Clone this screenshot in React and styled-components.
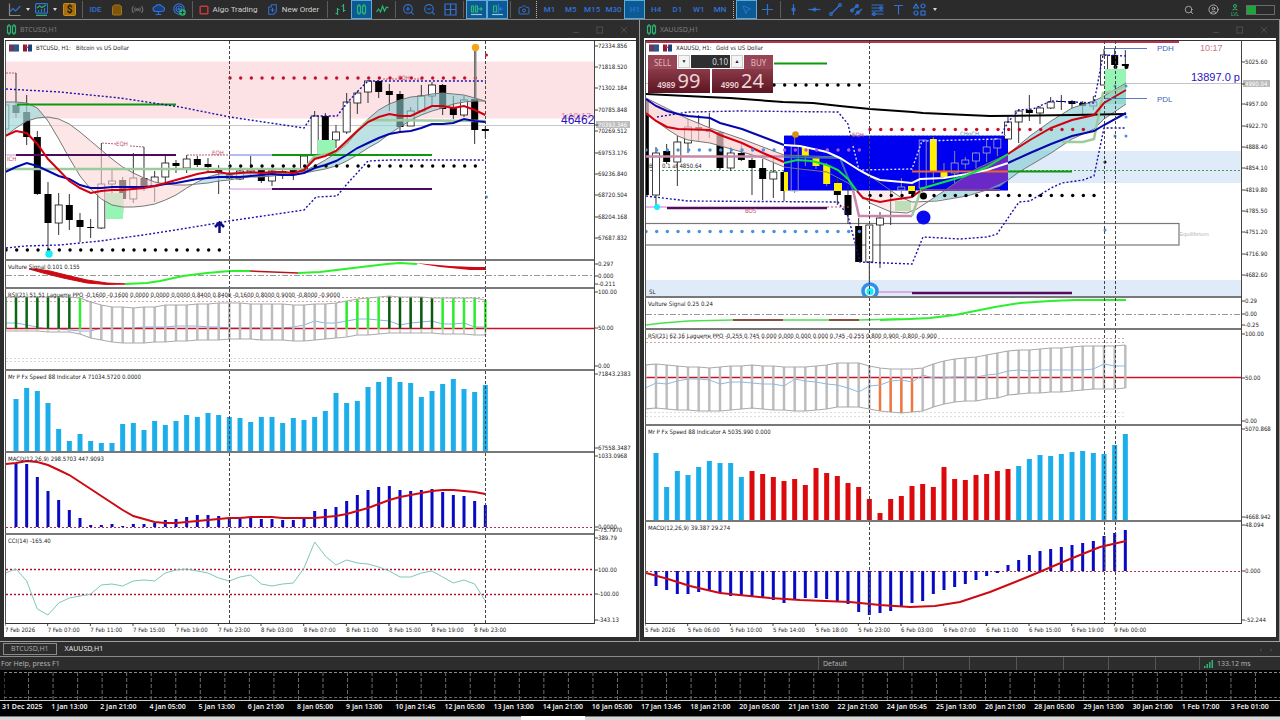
import React, { useState } from 'react';
import styled, { createGlobalStyle } from 'styled-components';
import { ZoomIn, ZoomOut, ShoppingBag, Search, CircleUser, MousePointer2, Camera, Cloud } from 'lucide-react';

const GlobalStyle = createGlobalStyle`
  * {
    box-sizing: border-box;
  }

  body {
    margin: 0;
    background-color: #2d2d2d;
    font-family: 'Noto Sans', 'Open Sans', sans-serif;
    font-size: 7px;
    overflow-x: hidden;
  }

  button,
  input {
    font-family: inherit;
    padding: 0;
    border: none;
    background: none;
  }
`;

/* ---------- toolbar ---------- */

const Toolbar = styled.header`
  display: flex;
  align-items: center;
  height: 20px;
  padding: 0 5px;
  border-bottom: 1px solid #858585;
  background-color: #2b2b2b;
  font-family: Roboto, 'Noto Sans', sans-serif;
`;

const Tool = styled.button`
  display: flex;
  align-items: center;
  justify-content: center;
  gap: 4px;
  flex: none;
  width: ${(props) => props.$w || '21px'};
  height: 19px;
  color: ${(props) => props.$color || '#2f72d8'};
  background-color: ${(props) => (props.$on ? '#0b5a94' : 'transparent')};
  border: 1px solid ${(props) => (props.$on ? '#5fa8d8' : 'transparent')};
  font-size: 8px;
  font-weight: ${(props) => (props.$bold ? 500 : 400)};
  white-space: nowrap;
`;

const Caret = styled.button`
  display: flex;
  align-items: center;
  justify-content: center;
  flex: none;
  width: 9px;
  height: 19px;

  &::after {
    content: '';
    border: 2px solid transparent;
    border-top: 3px solid #d8d8d8;
    border-bottom: none;
  }
`;

const Sep = styled.span`
  flex: none;
  width: 1px;
  height: 17px;
  margin: 0 2px;
  border-left: 1px ${(props) => (props.$dotted ? 'dotted #bdbdbd' : 'solid #5c5c5c')};
`;

const Frames = styled.div`
  display: grid;
  grid-template-columns: repeat(9, 1fr);
  flex: none;
  width: 192px;
`;

const Spacer = styled.span`
  flex: 1;
`;

const Battery = styled.span`
  width: 29px;
  height: 10px;
  border: 1px solid #6a6a6a;
  background: linear-gradient(90deg, #1fa33c 9px, #2b2b2b 9px);
`;

const Glyph = ({ size = 13, children, color = 'currentColor' }) => (
  <svg width={size} height={size} viewBox="0 0 13 13" fill="none" stroke={color} strokeWidth="1.2">
    {children}
  </svg>
);

const GREEN = '#2bb673';

const CandlesGlyph = () => (
  <Glyph color={GREEN}>
    <rect x="2.5" y="3" width="3" height="7" />
    <rect x="7.5" y="3" width="3" height="7" />
    <path d="M4 1v2M4 10v2M9 1v2M9 10v2" />
  </Glyph>
);

function MainToolbar() {
  const [frame, setFrame] = useState('H1');
  return (
    <Toolbar>
      <Tool $w="18px" aria-label="Chart">
        <Glyph>
          <path d="M1.5 0.5v12h11" stroke="#8a8a8a" />
          <path d="M2 8.5l3-3 2.5 2.5 5-5" />
        </Glyph>
      </Tool>
      <Caret aria-label="Chart list" />
      <Tool $w="18px" aria-label="Indicators">
        <Glyph>
          <rect x="0.6" y="0.6" width="12" height="9.5" rx="1" />
          <path d="M2 5l2.5-2 2.500 1.500 4-2.500M1 12.300h11" stroke={GREEN} />
          <path d="M3.500 7v2M6.500 6v3M9.500 5v4" />
        </Glyph>
      </Tool>
      <Caret aria-label="Indicator list" />
      <Tool aria-label="Market">
        <svg width="13" height="13">
          <rect x="0.5" y="0.5" width="12" height="12" rx="1" fill="#a86f10" stroke="#c98a18" />
          <text x="6.5" y="10" textAnchor="middle" fontSize="10" fontWeight="bold" fill="#1d1607">$</text>
        </svg>
      </Tool>
      <Sep />
      <Tool $bold>IDE</Tool>
      <Tool $color="#a87412" aria-label="Store"><ShoppingBag size={12} fill="#7d560f" /></Tool>
      <Tool $color="#6c6c6c" aria-label="Signals">
        <Glyph>
          <circle cx="6.500" cy="6.500" r="1" />
          <path d="M4.500 4.500q-1.500 2 0 4M8.500 4.500q1.500 2 0 4M2.500 3q-2.500 3.500 0 7M10.500 3q2.500 3.500 0 7" />
        </Glyph>
      </Tool>
      <Tool aria-label="Cloud">
        <Glyph>
          <path d="M3.500 8.500a2.500 2.500 0 0 1 0-5a3.500 3 0 0 1 6.500 0a2.500 2.500 0 0 1 0 5z" fill="#1c3f75" />
          <path d="M6.500 8.500v3M3.500 11.500h6" />
        </Glyph>
      </Tool>
      <Tool aria-label="Copy">
        <Glyph>
          <circle cx="6" cy="6" r="5.200" />
          <circle cx="6" cy="6" r="3" />
          <circle cx="6" cy="6" r="1" />
          <circle cx="9.500" cy="9.500" r="3.300" fill="#2bb673" stroke="none" />
          <path d="M9.500 7.500v4M7.500 9.500h4" stroke="#173a26" />
        </Glyph>
      </Tool>
      <Sep />
      <Tool $w="66px" $color="#cfcfcf">
        <Glyph size={10} color="#c43a3a"><rect x="1.500" y="1.500" width="10" height="10" rx="1" strokeWidth="2" /></Glyph>
        Algo Trading
      </Tool>
      <Tool $w="64px" $color="#cfcfcf">
        <Glyph size={11} color="#2f72d8">
          <path d="M2 3.500h3v-2.500h6v8l-3 3h-6z" />
          <path d="M6.500 4.500v5M4 7h5" />
        </Glyph>
        New Order
      </Tool>
      <Sep />
      <Tool aria-label="Bars">
        <Glyph color={GREEN}>
          <path d="M3.500 5v7M1.500 10.500h2M3.500 6.500h2M9.500 1v8M7.500 3h2M9.500 7.500h2" />
        </Glyph>
      </Tool>
      <Tool $on aria-label="Candles"><CandlesGlyph /></Tool>
      <Tool aria-label="Line">
        <Glyph color={GREEN}><path d="M0.500 9l2-3 2 3 2-6 2 5 2-4 2 1" /></Glyph>
      </Tool>
      <Sep />
      <Tool aria-label="Zoom in"><ZoomIn size={13} /></Tool>
      <Tool aria-label="Zoom out"><ZoomOut size={13} /></Tool>
      <Tool aria-label="Tile windows">
        <Glyph><path d="M1 1h11v11h-11zM6.500 1v11M1 6.500h11" /></Glyph>
      </Tool>
      <Sep />
      <Tool $on aria-label="Auto scroll">
        <Glyph color={GREEN}>
          <path d="M1.500 3h2v6h-2zM5.500 3h2v6h-2zM8 6h4M10.500 4.500l1.500 1.500-1.500 1.500" />
          <path d="M1 11.500h11" stroke="#9cc4e4" />
        </Glyph>
      </Tool>
      <Tool $on aria-label="Chart shift">
        <Glyph>
          <path d="M2.500 3h3v6h-3z" stroke={GREEN} />
          <path d="M7.500 1v9M12 6h-3M10 4.500l-1.500 1.500 1.500 1.500" />
          <path d="M1 11.500h11" stroke="#9cc4e4" />
        </Glyph>
      </Tool>
      <Sep />
      <Tool aria-label="Screenshot"><Camera size={12} /></Tool>
      <Sep $dotted />
      <Frames>
        {['M1', 'M5', 'M15', 'M30', 'H1', 'H4', 'D1', 'W1', 'MN'].map((name) => (
          <Tool key={name} $bold $on={frame === name} onClick={() => setFrame(name)}>{name}</Tool>
        ))}
      </Frames>
      <Sep $dotted />
      <Tool $on aria-label="Cursor"><MousePointer2 size={11} /></Tool>
      <Tool aria-label="Crosshair"><Glyph><path d="M6.500 1v11M1 6.500h11" /></Glyph></Tool>
      <Sep />
      <Tool aria-label="Vertical line"><Glyph><path d="M6.500 1v11" /><circle cx="6.500" cy="6.500" r="1.500" /></Glyph></Tool>
      <Tool aria-label="Horizontal line"><Glyph><path d="M0.500 6.500h12" /><circle cx="6.500" cy="6.500" r="1.500" /></Glyph></Tool>
      <Tool aria-label="Trendline">
        <Glyph><path d="M2.500 10.500l8-8" /><circle cx="2" cy="11" r="1.300" /><circle cx="11" cy="2" r="1.300" /></Glyph>
      </Tool>
      <Tool aria-label="Channel">
        <Glyph><path d="M1 8l7-6M5 12l7-6" /><circle cx="2" cy="7.500" r="1.300" /><circle cx="7" cy="3" r="1.300" /><circle cx="8" cy="9.500" r="1.300" /></Glyph>
      </Tool>
      <Tool aria-label="Fibonacci">
        <Glyph><path d="M0.500 2h12M0.500 5h12M0.500 8h12M0.500 11h12" /><circle cx="10" cy="5" r="1.300" /><circle cx="3" cy="11" r="1.300" /></Glyph>
      </Tool>
      <Tool aria-label="Text"><Glyph><path d="M2 2.500h9M6.500 2.500v9" /></Glyph></Tool>
      <Tool aria-label="Shapes">
        <Glyph><path d="M3 1l2.500 4h-5z" /><circle cx="10" cy="3" r="2" /><circle cx="3" cy="10" r="2" /><rect x="8" y="8" width="4" height="4" /></Glyph>
      </Tool>
      <Caret aria-label="Shape list" />
      <Spacer />
      <Tool $w="24px" $color="#b5b5b5" aria-label="Search"><Search size={10} /></Tool>
      <Tool $w="24px" $color="#b5b5b5" aria-label="Account"><CircleUser size={11} /></Tool>
      <Tool aria-label="Level">
        <svg width="11" height="12" fill="none" stroke={GREEN}>
          <circle cx="5" cy="2" r="1.500" />
          <path d="M2.500 6q2.500-2.500 5 0" />
          <text x="5" y="12" textAnchor="middle" fontSize="5" fill={GREEN} stroke="none">LVL</text>
        </svg>
      </Tool>
      <Battery />
    </Toolbar>
  );
}

/* ---------- chart windows ---------- */

const Desktop = styled.main`
  display: grid;
  grid-template-columns: 1fr 1fr;
  border-bottom: 1px solid #a0a0a0;
`;

const Window = styled.section`
  display: flex;
  flex-direction: column;
  min-width: 0;
  padding: 0 3px 4px 4px;
  border-right: 1px solid #9a9a9a;
`;

const TitleBar = styled.div`
  display: flex;
  align-items: center;
  gap: 2px;
  height: 18px;
  padding: 0 1px;
  color: #7d7d7d;
`;

const Title = styled.h2`
  flex: 1;
  margin: 0;
  font-size: 7px;
  font-weight: 400;
`;

const WinButton = styled.button`
  width: 22px;
  height: 12px;
  color: #5a5a5a;
  line-height: 1;
`;

const Sheet = styled.div`
  position: relative;
  padding: 2px 0 0 1px;
  background-color: #fff;
`;

const Pane = styled.div`
  display: flex;
  height: ${(props) => props.$h}px;

  &:first-child {
    border-top: 1px solid #333;
  }
`;

const Plot = styled.svg`
  flex: 1;
  min-width: 0;
  height: 100%;
  overflow: hidden;
  border-left: 1px solid #555;
  border-bottom: ${(props) => (props.$last ? '1px solid #333' : '2px solid #787878')};
`;

const Scale = styled.svg`
  flex: none;
  width: ${(props) => props.$w}px;
  height: 100%;
  overflow: visible;
  border-left: 1px solid #444;
`;

const TimeScale = styled.svg`
  display: block;
  width: 100%;
  height: 13px;
`;

const Label = styled.text`
  font-family: ${(props) => (props.$arial ? "'Liberation Sans', Arial, sans-serif" : "'DejaVu Sans Condensed', 'Noto Sans', sans-serif")};
  font-size: ${(props) => props.$size || 6}px;
  fill: ${(props) => props.$fill || '#222'};
`;

const Panel = styled.div`
  position: absolute;
  top: 17px;
  left: 4px;
  display: grid;
  grid-template-columns: 1fr 1fr;
  gap: 0 2px;
  width: 125px;
  background-color: #fff;
`;

const PanelTop = styled.div`
  display: grid;
  grid-column: span 2;
  grid-template-columns: 29px 12px 1fr 12px 29px;
  gap: 0 1px;
  height: 14px;
`;

const TradeButton = styled.button`
  height: 14px;
  background-color: #974554;
  color: #e2b9bf;
  font-size: 8px;
`;

const StepButton = styled.button`
  height: 13px;
  border: 1px solid #ccc;
  background-color: #f4f4f4;
  color: #222;
  font-size: 5px;
  line-height: 1;
`;

const Lots = styled.input`
  min-width: 0;
  width: 100%;
  height: 13px;
  padding-right: 2px;
  background-color: #2d2f31;
  color: #ddd;
  font-size: 8px;
  text-align: right;
`;

const Price = styled.button`
  display: flex;
  align-items: baseline;
  justify-content: center;
  gap: 2px;
  height: 24px;
  background: linear-gradient(#8b3a49, #5c1522);
  color: #ecd4d7;
  font-size: 8px;
  font-weight: 600;
  line-height: 24px;

  > span {
    font-size: 20px;
    font-weight: 400;
  }
`;

const STEP = 32 / 3;
const LEFT = 5.333;
const RIGHT = 645.333;

const line = (x0, ys, from = 0) => ys.map((y, i) => `${(x0 + (i + from) * STEP).toFixed(1)},${y}`).join(' ');
const band = (x0, a, b, from, to) =>
  `${line(x0, a.slice(from, to + 1), from)} ${line(x0, b.slice(from, to + 1), from).split(' ').reverse().join(' ')}`;

// x positions of every candle are shared, so a candle is [high, top, bottom, low, kind]
function Candles({ x0, data }) {
  return data.map(([high, top, bottom, low, kind], i) => {
    const x = x0 + i * STEP;
    const inside = kind === 'o' || kind === 'y';
    const stroke = inside ? '#aab' : '#111';
    const fill = { b: '#000', w: '#fff', y: '#ffef00', o: 'none' }[kind];
    return (
      <g key={i}>
        <path d={`M${x} ${high}V${top}M${x} ${bottom}V${low}`} stroke={inside ? '#889' : '#333'} />
        <rect
          x={x - 3.5}
          y={top}
          width="7"
          height={Math.max(1, bottom - top)}
          fill={fill}
          stroke={kind === 'b' || kind === 'y' ? 'none' : stroke}
          strokeWidth="0.8"
        />
      </g>
    );
  });
}

function Dots({ x0, from, to, y, color }) {
  return Array.from({ length: to - from + 1 }, (_, i) => (
    <circle key={i} cx={x0 + (from + i) * STEP + 0.7} cy={y} r="1.7" fill={color} />
  ));
}

function Columns({ x0, tops, base, width, color }) {
  return tops.map((y, i) => (
    <rect
      key={i}
      x={x0 + (i + 1) * STEP - width / 2}
      y={Math.min(y, base)}
      width={width}
      height={Math.abs(base - y)}
      fill={typeof color === 'function' ? color(i + 1) : color}
    />
  ));
}

function Ribs({ x0, upper, lower, middle, tint }) {
  return (
    <>
      {upper.map((y, i) => {
        const x = x0 + i * STEP;
        const color = tint(i);
        if (!color) return <path key={i} d={`M${x} ${y}V${lower[i]}`} stroke="#bdbdbd" strokeWidth="2.5" />;
        const up = color !== '#f07840';
        return (
          <g key={i}>
            <path d={`M${x} ${y}V${lower[i]}`} stroke="#ccc" strokeWidth="2" />
            <path d={`M${x} ${up ? y : middle}V${up ? middle : lower[i]}`} stroke={color} strokeWidth="2.5" />
          </g>
        );
      })}
      <polyline points={line(x0, upper)} fill="none" stroke="#aaa" strokeWidth="1.2" />
      <polyline points={line(x0, lower)} fill="none" stroke="#aaa" strokeWidth="1.2" />
    </>
  );
}

function Section({ x, y, h, title, scale, scaleWidth, cursors, last, children }) {
  return (
    <Pane $h={h}>
      <Plot $last={last}>
        <g transform={`translate(${-x} ${-y})`}>
          {children}
          {cursors.map((cx) => (
            <path key={cx} d={`M${cx} ${y}v${h}`} stroke="#444" strokeDasharray="3 2" />
          ))}
          {title && <Label x={x + 2} y={y + 8}>{title}</Label>}
        </g>
      </Plot>
      <Scale $w={scaleWidth}>
        <g transform={`translate(0 ${-y})`}>
          {scale.map(([ly, text, mark]) => (
            <g key={text}>
              {mark && <rect x="1" y={ly - 4} width={scaleWidth - 8} height="7" fill="#bbb" />}
              <path d={`M0 ${ly}h3`} stroke="#444" />
              <Label x="3" y={ly + 2} $fill={mark ? '#fff' : undefined}>{text}</Label>
            </g>
          ))}
        </g>
      </Scale>
    </Pane>
  );
}

function Times({ x, first, labels }) {
  return (
    <TimeScale>
      {labels.map((text, i) => {
        const tx = first - x + i * STEP * 4;
        return (
          <g key={text}>
            <path d={`M${tx} 0v2`} stroke="#444" />
            <Label x={tx} y="8">{text}</Label>
          </g>
        );
      })}
    </TimeScale>
  );
}

function ChartWindow({ name, children }) {
  return (
    <Window>
      <TitleBar>
        <CandlesGlyph />
        <Title>{name}</Title>
        <WinButton aria-label="Minimize"><Glyph size={8}><path d="M2 10.500h9" /></Glyph></WinButton>
        <WinButton aria-label="Maximize"><Glyph size={8}><rect x="1.500" y="1.500" width="9" height="10" /></Glyph></WinButton>
        <WinButton aria-label="Close"><Glyph size={8}><path d="M2 2l9 9M11 2l-9 9" /></Glyph></WinButton>
      </TitleBar>
      <Sheet>{children}</Sheet>
    </Window>
  );
}

function Heading({ x, symbol, text }) {
  return (
    <g>
      <rect x={x + 3} y="44.500" width="10" height="7" fill="#22346e" />
      <path d={`M${x + 3} 46h5M${x + 3} 48h5M${x + 3} 50h5`} stroke="#c23a3a" />
      <path d={`M${x + 8} 46h5M${x + 8} 48h5M${x + 8} 50h5`} stroke="#3f9be0" strokeWidth="0.7" />
      <rect x={x + 17} y="44.500" width="4" height="7" fill="#8d1b2c" />
      <rect x={x + 22} y="44.500" width="4" height="7" fill="#1d3f86" />
      <path d={`M${x + 19} 45l2 3 2-3`} fill="none" stroke="#c23a3a" />
      <Label x={x + 30} y="50">{symbol}</Label>
      <Label x={x + 70} y="50">{text}</Label>
    </g>
  );
}

/* ---------- BTCUSD ---------- */

const btcCandles = [
  [104, 105, 129, 130, 'w'], [73, 105, 113, 118, 'b'], [95, 112, 137, 145, 'b'], [131, 137, 194, 195, 'b'],
  [182, 194, 223, 249, 'b'], [193, 205, 223, 235, 'w'], [194, 205, 220, 230, 'b'], [213, 220, 227, 242, 'b'],
  [219, 227, 228, 238, 'b'], [143, 184, 228, 229, 'w'], [170, 181, 184, 193, 'w'], [177, 180, 199, 213, 'b'],
  [153, 178, 199, 203, 'w'], [147, 178, 188, 191, 'b'], [171, 177, 186, 202, 'w'], [156, 163, 177, 182, 'w'],
  [160, 163, 166, 173, 'b'], [155, 159, 168, 173, 'w'], [156, 159, 165, 167, 'b'], [158, 164, 167, 172, 'b'],
  [165, 170, 173, 194, 'b'], [168, 173, 179, 180, 'b'], [170, 171, 179, 180, 'w'], [156, 170, 173, 177, 'w'],
  [169, 170, 181, 183, 'b'], [169, 171, 181, 186, 'w'], [168, 171, 176, 179, 'b'], [168, 170, 174, 180, 'b'],
  [155, 156, 171, 173, 'w'], [111, 116, 155, 155, 'w'], [113, 116, 140, 140, 'b'], [125, 132, 140, 148, 'w'],
  [93, 102, 132, 134, 'w'], [91, 93, 103, 114, 'w'], [80, 81, 92, 103, 'w'], [80, 81, 92, 98, 'b'],
  [84, 91, 95, 111, 'b'], [91, 94, 127, 132, 'b'], [107, 111, 126, 126, 'w'], [85, 96, 111, 112, 'w'],
  [82, 85, 96, 105, 'w'], [84, 85, 109, 115, 'b'], [96, 108, 115, 119, 'b'], [96, 100, 115, 117, 'w'],
  [48, 99, 130, 144, 'b'], [126, 129, 131, 138, 'b'],
];
const btcRed = [136, 131, 133, 144, 159, 170, 181, 188, 193, 191, 190, 190, 189, 188, 186, 183, 180, 177, 174, 172, 172, 174, 173, 172, 173, 172, 172, 173, 170, 159, 156, 151, 141, 131, 122, 117, 114, 116, 116, 111, 106, 106, 108, 106, 110, 115];
const btcBlue = [172, 167, 163, 166, 171, 176, 179, 185, 188, 188, 187, 187, 187, 187, 186, 184, 183, 181, 179, 178, 177, 177, 177, 176, 175, 174, 175, 175, 173, 168, 165, 161, 155, 148, 143, 138, 134, 132, 131, 128, 124, 124, 123, 119, 121, 122];
const btcFast = [102, 102, 103, 108, 121, 139, 158, 176, 189, 199, 205, 207, 207, 206, 204, 200, 195, 188, 182, 177, 174, 173, 173, 173, 173, 173, 173, 173, 171, 166, 160, 153, 144, 132, 119, 110, 104, 100, 97, 96, 94, 93, 94, 95, 98, 101];
const btcSlow = [136, 128, 121, 118, 117, 119, 124, 132, 141, 150, 159, 167, 173, 178, 182, 184, 185, 185, 184, 183, 181, 180, 178, 177, 177, 176, 175, 174, 173, 171, 169, 166, 161, 155, 148, 142, 134, 127, 120, 115, 111, 108, 104, 102, 101, 101];
const btcUpper = [297, 297, 297, 297, 297, 297, 297, 298, 302, 305, 307, 307, 308, 307, 307, 305, 305, 305, 304, 304, 303, 303, 303, 304, 304, 304, 304, 305, 305, 304, 304, 303, 301, 299, 298, 297, 296, 297, 297, 297, 298, 298, 298, 298, 298, 300];
const btcLower = [331, 331, 331, 331, 332, 332, 332, 334, 338, 340, 342, 343, 343, 343, 342, 342, 341, 341, 340, 340, 340, 339, 339, 339, 340, 340, 340, 341, 341, 340, 339, 338, 337, 335, 335, 334, 333, 333, 333, 333, 333, 334, 334, 334, 335, 335];
const btcRsi = [323, 323, 325, 327, 329, 329, 330, 331, 331, 328, 328, 328, 328, 327, 327, 327, 326, 326, 326, 327, 327, 328, 328, 328, 328, 328, 328, 327, 325, 321, 323, 323, 321, 319, 319, 320, 321, 325, 323, 322, 321, 324, 324, 323, 327, 327];
const btcSpeed = [399, 388, 391, 403, 429, 441, 434, 441, 443, 443, 424, 423, 430, 421, 425, 421, 415, 417, 413, 415, 417, 418, 422, 417, 417, 423, 418, 420, 417, 411, 393, 403, 401, 387, 382, 377, 382, 383, 397, 391, 384, 379, 389, 392, 385];
const btcMacd = [463, 464, 477, 491, 500, 510, 518, 525, 525, 524, 526, 524, 524, 523, 520, 519, 517, 515, 515, 516, 519, 519, 518, 519, 519, 520, 520, 519, 511, 509, 507, 501, 495, 490, 487, 486, 490, 491, 490, 489, 492, 495, 496, 501, 505];
const btcSignal = [464, 463, 461, 462, 465, 470, 475, 482, 489, 496, 503, 510, 516, 519, 522, 523, 523, 522, 521, 520, 519, 518, 518, 517, 517, 517, 518, 518, 518, 518, 517, 516, 514, 511, 508, 504, 500, 497, 495, 493, 491, 490, 490, 491, 492, 494];
const btcCci = [573, 569, 581, 609, 615, 603, 598, 596, 594, 585, 584, 586, 581, 580, 581, 573, 570, 569, 571, 573, 578, 581, 577, 575, 584, 586, 584, 583, 568, 542, 556, 565, 560, 563, 564, 567, 571, 577, 577, 573, 571, 577, 583, 580, 584, 601];

const btcTint = (i) => {
  if (i < 7) return '#0a6a14';
  if (i === 7 || (i > 31 && i < 36) || i > 40) return '#2cf02c';
  return i > 35 ? '#0b5a10' : null;
};

function BtcChart() {
  const common = { x: 6, scaleWidth: 42, cursors: [229.5, 485.5] };
  return (
    <ChartWindow name="BTCUSD,H1">
      <Section
        {...common}
        y={41}
        h={221}
        scale={[
          [46, '72334.856'], [67, '71818.520'], [88, '71302.184'], [110, '70785.848'], [131, '70269.512'],
          [125, '70393.346', true], [153, '69753.176'], [174, '69236.840'], [195, '68720.504'], [217, '68204.168'], [238, '67687.832'],
        ]}
      >
        <rect x="6" y="61.500" width="3000" height="57" fill="#fce1e5" />
        <path d="M6 125.500H3000" stroke="#c8c8c8" />
        <path d="M6 73h10M102 143l14 1M130 146l14 1M187 155h42M383 79h14M414 79h8" stroke="#b06070" strokeDasharray="2 1" />
        <Candles x0={LEFT} data={btcCandles} />
        <rect x="106" y="193" width="17" height="26" fill="#96f5b4" />
        <rect x="318" y="140" width="17" height="14" fill="#96f5b4" />
        <polygon points={band(LEFT, btcFast, btcSlow, 0, 4)} fill="#a4dadc" fillOpacity="0.7" />
        <polygon points={band(LEFT, btcFast, btcSlow, 4, 18)} fill="#fbd5d5" fillOpacity="0.6" />
        <polygon points={band(LEFT, btcFast, btcSlow, 18, 28)} fill="#a8dcf0" fillOpacity="0.7" />
        <polygon points={band(LEFT, btcFast, btcSlow, 28, 45)} fill="#8fcfd2" fillOpacity="0.6" />
        <g fill="none" stroke="#777">
          <polyline points={line(LEFT, btcFast)} />
          <polyline points={line(LEFT, btcSlow)} />
        </g>
        <path d="M17 104.500H176M272 155H432" stroke="#0c9a0c" strokeWidth="2" />
        <path d="M16 155H176M272 189H432" stroke="#4b0a5e" strokeWidth="2" />
        <path d="M229 155h43" stroke="#6a7ae0" />
        <path d="M6 155h10M229 189h43" stroke="#d88ad8" />
        <polyline points="6,169 304,169 314,157 336,152 368,120 486,121" fill="none" stroke="#9dcb9d" strokeWidth="2.5" />
        <polyline points={line(LEFT, btcBlue)} fill="none" stroke="#0606ad" strokeWidth="2" />
        <polyline points={line(LEFT, btcRed)} fill="none" stroke="#d40010" strokeWidth="2" />
        <g fill="none" stroke="#1a12a8" strokeWidth="1.4" strokeDasharray="2 2">
          <polyline points="6,89 60,92 120,98 180,107 230,117 304,128 312,116 337,116 347,103 358,91 368,81 486,81" />
          <polyline points="6,248 25,246 60,245 100,241 150,234 200,226 229,221 304,210 316,197 337,196 347,184 368,161 390,160 486,160" />
        </g>
        <Dots x0={LEFT} from={21} to={44} y={78} color="#c8102a" />
        <Dots x0={LEFT} from={21} to={44} y={166} color="#000" />
        <Dots x0={LEFT} from={0} to={20} y={250} color="#000" />
        <circle cx="49" cy="254" r="3.700" fill="#14eef8" />
        <path d="M475.500 50v50" stroke="#888" strokeWidth="2" />
        <circle cx="475.500" cy="47.500" r="3.700" fill="#f5a417" />
        <circle cx="486.500" cy="55" r="1.500" fill="#d01020" />
        <circle cx="486.500" cy="197" r="1.500" fill="#3f9be0" />
        <path d="M219.500 233v-10M215 227l4.500-4.500 4.500 4.500" fill="none" stroke="#0b0b82" strokeWidth="2.5" />
        <Label x="116" y="146" $fill="#c0506a">EQH</Label>
        <Label x="212" y="155" $fill="#c0506a">EQH</Label>
        <Label x="398" y="80" $fill="#c0506a">EQH</Label>
        <Label x="7" y="161" $fill="#c0506a">ICH</Label>
        <Label x="561" y="119" $arial $size={9} $fill="#d88aa4">1:10:17</Label>
        <Label x="561" y="124" $arial $size={12} $fill="#2a12c0">46462</Label>
        <Heading x={6} symbol="BTCUSD, H1:" text="Bitcoin vs US Dollar" />
      </Section>

      <Section {...common} y={261} h={28} title="Vulture Signal 0.101 0.155" scale={[[264, '0.297'], [276, '0.000'], [284, '-0.211']]}>
        <path d="M6 275.500H3000" stroke="#999" strokeDasharray="6 2 2 2" />
        <polygon points="29,269 37,269 50,271 70,276 87,280 107,283 127,284 107,284.500 87,283 63,278 43,273" fill="#cc0a14" stroke="#cc0a14" />
        <polyline points="125,284 147,283 160,281 183,276 207,273 230,271 250,271" fill="none" stroke="#2cf02c" strokeWidth="2" />
        <path d="M250 271l48 2" stroke="#b81420" strokeWidth="1.5" />
        <polyline points="298,273 320,272 353,268 387,264 400,263 417,264" fill="none" stroke="#2cf02c" strokeWidth="2" />
        <polygon points="415,263 450,266 474,267 486,267 486,270 470,270 440,267" fill="#cc0a14" />
      </Section>

      <Section
        {...common}
        y={289}
        h={82}
        title="RSI(21) 51.51 Laguerre PPO -0.1600 -0.1600 0.0000 0.0000 0.0000 0.8400 0.8400 -0.1600 0.8000 0.9000 -0.8000 -0.9000"
        scale={[[292, '100.00'], [328, '50.00'], [366, '0.00']]}
      >
        <path d="M6 297.500H486M6 301.500H486" stroke="#d0a8a8" strokeDasharray="2 2" />
        <path d="M6 358.500H486M6 361.500H486" stroke="#d8d8d8" strokeDasharray="2 2" />
        <polyline points={line(LEFT, btcRsi)} fill="none" stroke="#7fb4e4" />
        <path d="M6 328.500H3000" stroke="#cc1028" strokeWidth="1.5" />
        <Ribs x0={LEFT} upper={btcUpper} lower={btcLower} middle={329} tint={btcTint} />
      </Section>

      <Section {...common} y={371} h={82} title="Mr P Fx Speed 88 Indicator A 71034.5720 0.0000" scale={[[374, '71843.2383'], [448, '67558.3487']]}>
        <Columns x0={LEFT} tops={btcSpeed} base={451} width={5} color="#1caeea" />
      </Section>

      <Section {...common} y={453} h={82} title="MACD(12,26,9) 298.5703 447.9093" scale={[[456, '1033.0968'], [527, '0.0000'], [530, '-75.7970']]}>
        <path d="M6 527.500H3000" stroke="#b03050" strokeDasharray="2 2" />
        <Columns x0={LEFT} tops={btcMacd} base={527} width={3} color="#0a0ac4" />
        <polyline points={line(LEFT, btcSignal)} fill="none" stroke="#cc0a14" strokeWidth="2" />
      </Section>

      <Section {...common} last y={535} h={89} title="CCI(14) -165.40" scale={[[538, '389.79'], [570, '100.00'], [594, '-100.00'], [620, '-343.13']]}>
        <path d="M6 569.500H3000M6 594.500H3000" stroke="#b01030" strokeWidth="1.5" strokeDasharray="2 2" />
        <polyline points={line(LEFT, btcCci)} fill="none" stroke="#7cc8b8" />
      </Section>
      <Times
        x={5}
        first={5}
        labels={['7 Feb 2026', '7 Feb 07:00', '7 Feb 11:00', '7 Feb 15:00', '7 Feb 19:00', '7 Feb 23:00', '8 Feb 03:00', '8 Feb 07:00', '8 Feb 11:00', '8 Feb 15:00', '8 Feb 19:00', '8 Feb 23:00']}
      />
    </ChartWindow>
  );
}

/* ---------- XAUUSD ---------- */

const goldCandles = [
  [99, 99, 195, 195, 'b'], [147, 153, 195, 206, 'w'], [144, 151, 162, 164, 'b'], [136, 142, 162, 186, 'w'],
  [119, 127, 143, 153, 'w'], [115, 127, 130, 142, 'b'], [113, 130, 132, 138, 'b'], [131, 132, 168, 170, 'b'],
  [147, 153, 168, 171, 'w'], [144, 153, 160, 161, 'b'], [158, 160, 168, 195, 'b'], [159, 168, 179, 200, 'b'],
  [158, 172, 179, 198, 'w'], [171, 172, 191, 201, 'b'], [136, 146, 191, 193, 'o'], [146, 147, 156, 166, 'y'],
  [157, 158, 166, 169, 'y'], [163, 165, 184, 186, 'y'], [178, 183, 195, 205, 'b'], [186, 195, 215, 224, 'b'],
  [218, 226, 262, 262, 'b'], [225, 225, 262, 293, 'w'], [212, 218, 225, 268, 'w'], [190, 216, 217, 225, 'b'],
  [178, 187, 190, 200, 'o'], [179, 186, 194, 196, 'b'], [140, 140, 188, 192, 'o'], [137, 139, 171, 183, 'y'],
  [163, 172, 177, 179, 'y'], [151, 163, 173, 183, 'o'], [157, 160, 164, 169, 'o'], [152, 153, 161, 168, 'o'],
  [139, 147, 153, 162, 'o'], [138, 139, 148, 156, 'o'], [117, 122, 139, 139, 'w'], [109, 111, 122, 143, 'w'],
  [95, 110, 113, 121, 'b'], [106, 108, 113, 124, 'w'], [97, 102, 108, 109, 'w'], [95, 101, 102, 110, 'b'],
  [100, 101, 104, 109, 'b'], [101, 103, 106, 115, 'b'], [96, 102, 106, 110, 'w'], [49, 55, 85, 85, 'w'],
  [48, 55, 65, 68, 'b'], [50, 64, 66, 73, 'b'],
];
const goldUpper = [365, 364, 365, 366, 367, 367, 368, 367, 366, 366, 365, 366, 366, 367, 367, 367, 366, 365, 363, 363, 363, 366, 368, 369, 369, 369, 368, 364, 361, 359, 358, 357, 355, 353, 351, 350, 350, 349, 348, 348, 347, 346, 346, 346, 346, 345];
const goldLower = [409, 408, 409, 410, 410, 411, 411, 411, 410, 409, 408, 409, 410, 410, 411, 411, 410, 409, 407, 407, 407, 409, 411, 412, 413, 412, 411, 407, 404, 402, 401, 401, 399, 398, 395, 394, 393, 393, 392, 392, 391, 390, 389, 389, 389, 388];
const goldRsi = [388, 383, 384, 381, 379, 379, 380, 384, 382, 382, 383, 384, 384, 386, 379, 381, 382, 384, 385, 388, 392, 386, 385, 381, 380, 382, 375, 378, 378, 377, 377, 377, 375, 374, 371, 370, 371, 370, 370, 370, 370, 370, 369, 364, 366, 366];
const goldSpeed = [453, 487, 471, 475, 467, 461, 463, 463, 477, 471, 474, 477, 481, 479, 485, 468, 473, 476, 483, 487, 499, 513, 499, 496, 486, 484, 487, 467, 479, 480, 475, 474, 471, 469, 466, 459, 455, 456, 454, 452, 451, 453, 454, 445, 434];
const goldMacd = [586, 590, 594, 594, 592, 591, 593, 596, 596, 597, 598, 600, 603, 599, 598, 598, 599, 601, 604, 612, 615, 613, 611, 606, 603, 601, 594, 590, 587, 584, 580, 576, 573, 565, 560, 555, 551, 549, 547, 545, 543, 541, 536, 533, 530];

const FAST = '646,114 667,129 678,136 688,140 710,143 742,152 763,158 784,167 800,169 827,172 848,183 870,203 891,212 907,213 917,209 944,191 976,169 1008,154 1030,136 1051,121 1072,108 1094,101 1104,96 1126,83';
const SLOW = '646,98 688,119 710,128 742,139 784,155 838,157 870,176 900,197 912,202 937,201 967,196 1000,186 1019,172 1051,153 1072,139 1094,129 1104,119 1126,104';

function GoldChart() {
  const common = { x: 646, scaleWidth: 35, cursors: [869.5, 1104.5, 1115.5] };
  return (
    <ChartWindow name="XAUUSD,H1">
      <Section
        {...common}
        y={41}
        h={258}
        scale={[
          [62, '5025.60'], [84, '4990.04', true], [104, '4957.00'], [126, '4922.70'], [147, '4888.40'], [168, '4854.10'],
          [190, '4819.80'], [211, '4785.50'], [232, '4751.20'], [254, '4716.90'], [275, '4682.60'],
        ]}
      >
        <rect x="1008" y="151" width="3000" height="32" fill="#e0ebfa" />
        <rect x="646" y="280" width="3000" height="16" fill="#e0ebfa" />
        <path d="M646 42H1179" stroke="#c0304c" strokeWidth="2" />
        <path d="M646 83.500H3000" stroke="#c4c4c4" />
        <path d="M646 170.500H3000" stroke="#3c9a50" strokeDasharray="2 2" />
        <rect x="640" y="223.500" width="539" height="21.500" fill="none" stroke="#777" strokeWidth="1.2" />
        <rect x="784" y="135.500" width="224" height="55" fill="#0000f0" />
        <Candles x0={RIGHT} data={goldCandles} />
        <path d="M784 172h4v19h-4zM834 183h8v8h-8zM908 186h7v5h-7z" fill="#ffef00" />
        <rect x="895" y="201" width="16" height="10" fill="#96e8a4" />
        <rect x="1105" y="69" width="21" height="35" fill="#96f5b4" />
        <polygon points="646,98 688,119 710,128 742,139 784,155 784,167 763,158 742,152 710,143 688,140 678,136 667,129 646,114" fill="#fbd0d0" fillOpacity="0.7" />
        <polygon points="859,190 870,203 891,212 907,213 930,202 912,202 892,191" fill="#fbd0d0" fillOpacity="0.4" />
        <polygon points="930,201 944,191 976,169 1008,154 1030,136 1051,121 1072,108 1094,101 1104,96 1126,83 1126,104 1104,119 1094,129 1072,139 1051,153 1019,172 1000,186 967,196" fill="#8fd0d6" fillOpacity="0.7" />
        <polygon points="944,190.500 976,169 1008,154 1008,180 985,190.500" fill="#6a28c8" />
        <polyline points={FAST} fill="none" stroke="#777" />
        <polyline points={SLOW} fill="none" stroke="#777" />
        <polyline points="646,94 707,97 730,98 783,102 813,103 840,106 870,109 913,112 923,113 967,115 990,116 1073,115 1126,114" fill="none" stroke="#000" strokeWidth="2" />
        <path d="M646 156.500H784" stroke="#c888aa" strokeWidth="2.5" />
        <polyline points="784,157 840,158 853,190" fill="none" stroke="#3a6cb8" strokeWidth="2" />
        <polyline points="853,190 859,216 912,216" fill="none" stroke="#c888aa" strokeWidth="2.5" />
        <polyline points="912,216 921,190" fill="none" stroke="#9dcb9d" strokeWidth="2.5" />
        <path d="M921 190H1000" stroke="#7a4a9a" strokeWidth="2" />
        <polyline points="1062,142 1083,142 1094,139 1103,93 1115,91 1126,85" fill="none" stroke="#9dcb9d" strokeWidth="2.5" />
        <path d="M774 63.500h53M1008 171.500h64" stroke="#0c9a0c" strokeWidth="2" />
        <path d="M912 171.500h96" stroke="#f06030" strokeWidth="2" />
        <path d="M667 208h160M912 293h160" stroke="#5a0a5e" strokeWidth="2.5" />
        <path d="M646 207h21M870 292h42" stroke="#d070d0" />
        <path d="M827 207h22" stroke="#c05070" strokeDasharray="2 2" />
        <g fill="none" strokeWidth="2">
          <polyline points="646,99 656,106 667,111 678,114 688,116 699,117 710,118 720,123 742,129 763,137 784,145" stroke="#0606ad" />
          <polyline points="784,145 800,146 827,152 840,158 848,163 859,170 870,176 880,180 902,182 912,183 920,179 944,178 967,174 987,170 1008,163" stroke="#fff" />
          <polyline points="1008,163 1030,153 1051,144 1072,136 1094,131 1104,125 1126,113" stroke="#0606ad" />
          <polyline points="646,113 656,121 667,127 678,129 710,130 720,135 742,143 763,153 784,162" stroke="#d40010" />
          <polyline points="784,163 797,160 812,161 827,165 838,170 848,179 857,191" stroke="#10e040" />
          <polyline points="857,191 863,198 880,202 891,200 912,197 920,191" stroke="#d40010" />
          <polyline points="920,189 944,182 965,176 987,167 1008,154" stroke="#10e040" />
          <polyline points="1008,154 1030,140 1051,128 1072,120 1094,115 1104,103 1126,90" stroke="#d40010" />
        </g>
        <g fill="none" stroke="#1a12a8" strokeWidth="1.4" strokeDasharray="2 2">
          <polyline points="657,117 688,112 740,111 838,112 848,124 853,146" />
          <polyline points="1000,137 1008,122 1019,110 1033,109 1051,101 1094,103 1103,55 1126,56" />
          <polyline points="646,196 688,201 838,202 848,216 860,262 912,264 923,237 960,239 987,237 997,234 1019,202 1030,201 1051,188 1062,183 1083,180 1094,176 1104,128 1126,128" />
        </g>
        <polyline points="853,146 859,170 912,169 922,141 998,139" fill="none" stroke="#d8dcff" strokeWidth="1.4" strokeDasharray="2 2" />
        <path d="M784 135.500H1008" stroke="#9aa4d8" strokeDasharray="2 2" />
        <Dots x0={RIGHT} from={12} to={20} y={85} color="#000" />
        <Dots x0={RIGHT} from={21} to={41} y={129.5} color="#c8102a" />
        <Dots x0={RIGHT} from={0} to={12} y={150} color="#4a90dc" />
        <Dots x0={RIGHT} from={13} to={20} y={150} color="#b05ae0" />
        <Dots x0={RIGHT} from={0} to={20} y={231.5} color="#4a90dc" />
        <Dots x0={RIGHT} from={21} to={42} y={195.5} color="#000" />
        {[[1115, 86], [1126, 86], [1126, 117], [1126, 136], [1115, 136], [1105, 230]].map(([cx, cy]) => (
          <circle key={`${cx}-${cy}`} cx={cx} cy={cy} r="1.5" fill="#4a90dc" />
        ))}
        <circle cx="1105" cy="162" r="1.5" />
        <circle cx="1115.500" cy="67" r="2" />
        <circle cx="1126.500" cy="67" r="2" />
        <circle cx="657" cy="207" r="3" fill="#14eef8" />
        <circle cx="795.500" cy="134.500" r="3.300" fill="#d8920f" />
        <circle cx="923.500" cy="196" r="3.500" />
        <circle cx="923.500" cy="217.500" r="7" fill="#0a0af0" />
        <circle cx="870" cy="291" r="7" fill="#dff4ff" stroke="#2f8fe6" strokeWidth="3.5" />
        <circle cx="870" cy="291.500" r="3.500" fill="#14eef8" />
        <path d="M1104 48.500h43M1104 98.500h43" stroke="#5a78c8" />
        <Label x="1157" y="51" $arial $size={8} $fill="#3f62c4">PDH</Label>
        <Label x="1157" y="102" $arial $size={8} $fill="#3f62c4">PDL</Label>
        <Label x="1200" y="51" $arial $size={9} $fill="#c47a88">10:17</Label>
        <Label x="1191" y="81" $arial $size={11} $fill="#2a12c0">13897.0 p</Label>
        <Label x="1179" y="236" $arial $fill="#b8b8b8">Equilibrium</Label>
        <Label x="852" y="137" $fill="#c0506a">EQH</Label>
        <Label x="960" y="136" $fill="#3f9a9a">CHoCH</Label>
        <Label x="745" y="213" $fill="#c0506a">BOS</Label>
        <Label x="649" y="168">B</Label>
        <Label x="662" y="168">0.1 at 4850.64</Label>
        <Label x="649" y="294">SL</Label>
        <Heading x={646} symbol="XAUUSD, H1:" text="Gold vs US Dollar" />
      </Section>

      <Section {...common} y={298} h={32} title="Vulture Signal 0.25 0.24" scale={[[301, '0.29'], [314, '0.00'], [325, '-0.25']]}>
        <path d="M646 314.500H3000" stroke="#999" strokeDasharray="6 2 2 2" />
        <polyline points="646,325 663,323 688,321 733,320 859,320 900,319" fill="none" stroke="#4fe04f" strokeWidth="1.5" />
        <path d="M733 320h50M829 320h30" stroke="#8d2030" strokeWidth="1.5" />
        <polyline points="880,320 910,319 930,318 955,315 975,311 995,307 1020,303 1050,301 1075,300 1126,300" fill="none" stroke="#2cf02c" strokeWidth="2" />
      </Section>

      <Section
        {...common}
        y={330}
        h={96}
        title="RSI(21) 62.16 Laguerre PPO -0.255 0.745 0.000 0.000 0.000 0.000 0.745 -0.255 0.800 0.900 -0.800 -0.900"
        scale={[[334, '100.00'], [378, '50.00'], [421, '0.00']]}
      >
        <path d="M646 338.500H1126M646 342.500H1126" stroke="#d0a8a8" strokeDasharray="2 2" />
        <path d="M646 412.500H1126M646 416.500H1126" stroke="#d8e0d8" strokeDasharray="2 2" />
        <path d="M646 377.500H3000" stroke="#cc1028" strokeWidth="1.5" />
        <Ribs x0={RIGHT} upper={goldUpper} lower={goldLower} middle={378} tint={(i) => (i > 21 && i < 26 ? '#f07840' : null)} />
        <polyline points={line(RIGHT, goldRsi)} fill="none" stroke="#8fb8dc" />
      </Section>

      <Section {...common} y={426} h={96} title="Mr P Fx Speed 88 Indicator A 5035.990 0.000" scale={[[429, '5070.868'], [517, '4668.942']]}>
        <Columns x0={RIGHT} tops={goldSpeed} base={520} width={5} color={(i) => (i > 9 && i < 35 ? '#dc0a0e' : '#1caeea')} />
      </Section>

      <Section {...common} last y={522} h={102} title="MACD(12,26,9) 39.387 29.274" scale={[[525, '48.094'], [571, '0.000'], [620, '-52.244']]}>
        <path d="M646 571.500H3000" stroke="#b03050" strokeDasharray="2 2" />
        <Columns x0={RIGHT} tops={goldMacd} base={571} width={3} color="#0a0ac4" />
        <polyline
          points="646,573 668,579 690,586 720,593 770,598 800,600 850,602 880,605 910,607 935,606 960,602 990,592 1030,576 1070,559 1100,547 1126,541"
          fill="none"
          stroke="#cc0a14"
          strokeWidth="2"
        />
      </Section>
      <Times
        x={645}
        first={645}
        labels={['5 Feb 2026', '5 Feb 06:00', '5 Feb 10:00', '5 Feb 14:00', '5 Feb 18:00', '5 Feb 23:00', '6 Feb 03:00', '6 Feb 07:00', '6 Feb 11:00', '6 Feb 15:00', '6 Feb 19:00', '9 Feb 00:00']}
      />

      <Panel>
        <PanelTop>
          <TradeButton>SELL</TradeButton>
          <StepButton aria-label="Decrease">▼</StepButton>
          <Lots aria-label="Volume" defaultValue="0.10" />
          <StepButton aria-label="Increase">▲</StepButton>
          <TradeButton>BUY</TradeButton>
        </PanelTop>
        <Price>4989<span>99</span></Price>
        <Price>4990<span>24</span></Price>
      </Panel>
    </ChartWindow>
  );
}

/* ---------- bottom bars ---------- */

const Tabs = styled.nav`
  display: flex;
  align-items: center;
  gap: 8px;
  height: 15px;
  padding: 0 8px 0 3px;
  border-bottom: 1px solid #8a8a8a;
`;

const Tab = styled.button`
  height: 12px;
  padding: 0 ${(props) => (props.$on ? '0' : '7px')};
  border: ${(props) => (props.$on ? 'none' : '1px solid #8a8a8a')};
  color: ${(props) => (props.$on ? '#e4e4e4' : '#a4a4a4')};
  font-size: 7px;
  line-height: 10px;
`;

const Arrows = styled.span`
  color: #666;
`;

const Status = styled.footer`
  display: grid;
  grid-template-columns: 1fr 85px 66px 47px 47px 45px 47px 44px 81px;
  height: 13px;
  color: #b0b0b0;
  line-height: 12px;

  > span {
    display: flex;
    align-items: center;
    gap: 4px;
    padding-left: 4px;
    border-left: 1px solid #555;
  }

  > span:first-child {
    padding-left: 1px;
    border: none;
  }
`;

const Timeline = styled.div`
  height: 46px;
  background-color: #000;
`;

const Grid = styled.svg`
  display: block;
  width: 100%;
  height: 31px;
  padding-left: 4px;
  border-bottom: 1px solid #d0d0d0;
`;

const Dates = styled.div`
  display: grid;
  grid-template-columns: repeat(26, 1fr);
  padding: 0 0 0 2px;
  color: #f0f0f0;
  font-weight: 600;
  line-height: 11px;
  white-space: nowrap;
`;

const Strip = styled.div`
  display: grid;
  grid-template-columns: 521fr 64fr 695fr;
  height: 4px;
  background-color: #d8d8d8;

  > span {
    border-top: 1px solid #777;
  }
`;

const StripTab = styled.b`
  background-color: #fff;
`;

const dates = [
  '31 Dec 2025', '1 Jan 13:00', '2 Jan 21:00', '4 Jan 05:00', '5 Jan 13:00', '6 Jan 21:00', '8 Jan 05:00',
  '9 Jan 13:00', '10 Jan 21:45', '12 Jan 05:00', '13 Jan 13:00', '14 Jan 21:00', '16 Jan 05:00', '17 Jan 13:45',
  '18 Jan 21:00', '20 Jan 05:00', '21 Jan 13:00', '22 Jan 21:00', '24 Jan 05:45', '25 Jan 13:00', '26 Jan 21:00',
  '28 Jan 05:00', '29 Jan 13:00', '30 Jan 21:00', '1 Feb 17:00', '3 Feb 01:00',
];

export default function App() {
  return (
    <>
      <GlobalStyle />
      <MainToolbar />
      <Desktop>
        <BtcChart />
        <GoldChart />
      </Desktop>
      <Tabs>
        <Tab>BTCUSD,H1</Tab>
        <Tab $on>XAUUSD,H1</Tab>
        <Spacer />
        <Arrows>‹</Arrows>
        <Arrows>›</Arrows>
      </Tabs>
      <Status>
        <span>For Help, press F1</span>
        <span>Default</span>
        <span />
        <span />
        <span />
        <span />
        <span />
        <span />
        <span>
          <svg width="9" height="8" fill={GREEN}>
            <path d="M0 6h1.500v2h-1.500zM2.500 4h1.500v4h-1.500zM5 2h1.500v6h-1.500zM7.500 0h1.500v8h-1.500z" />
          </svg>
          133.12 ms
        </span>
      </Status>
      <Timeline>
        <Grid>
          <line x1="0" x2="100%" y1="2.500" y2="2.500" stroke="#888" strokeDasharray="3 2" />
          <line x1="0" x2="100%" y1="27.500" y2="27.500" stroke="#666" strokeDasharray="3 2" />
          {Array.from({ length: 52 }, (_, i) => (
            <line key={i} x1={`${(i / 52) * 100}%`} x2={`${(i / 52) * 100}%`} y1="2" y2="30" stroke="#6e6e6e" strokeDasharray="4 2" />
          ))}
        </Grid>
        <Dates>
          {dates.map((date) => (
            <span key={date}>{date}</span>
          ))}
        </Dates>
      </Timeline>
      <Strip>
        <span />
        <StripTab />
        <span />
      </Strip>
    </>
  );
}
